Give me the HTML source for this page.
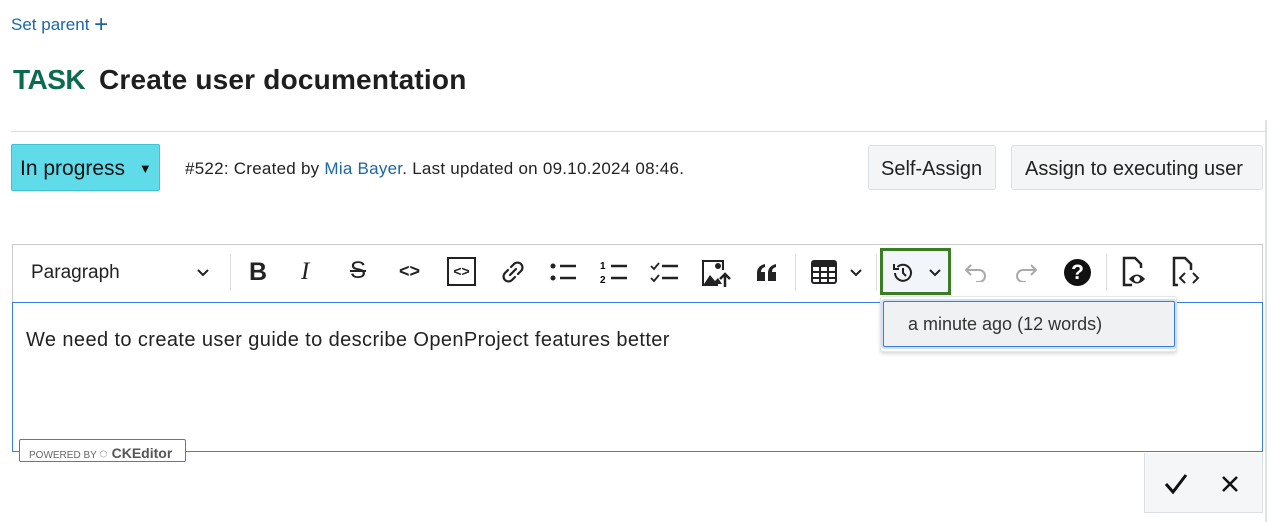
<!DOCTYPE html>
<html><head><meta charset="utf-8"><style>
*{box-sizing:border-box;margin:0;padding:0}
body{width:1272px;height:522px;background:#fff;font-family:"Liberation Sans",sans-serif;color:#222;position:relative;overflow:hidden}
.a{position:absolute}
.ic{position:absolute;top:258px}
</style></head><body>
<div class="a" style="left:11px;top:14px;font-size:17px;color:#1a67a3">Set parent <span style="font-size:24px;position:relative;top:2px;line-height:17px">+</span></div>
<div class="a" style="left:13px;top:64px;font-size:28px;font-weight:bold;color:#0b6b4f;letter-spacing:-0.5px">TASK</div>
<div class="a" style="left:99px;top:64px;font-size:28px;font-weight:bold;color:#1e1e1e;letter-spacing:0.2px">Create user documentation</div>
<div class="a" style="left:11px;top:131px;width:1254px;height:1px;background:#d9dde2"></div>
<div class="a" style="left:1265px;top:120px;width:2px;height:402px;background:#e0e3e6"></div>
<div class="a" style="left:11px;top:144px;width:149px;height:47px;background:#5fdbe9;border:1px solid #3ec3d3;border-radius:2px;font-size:21px;padding:12px 0 0 8px;color:#111">In progress <span style="font-size:13px;position:relative;left:8px;top:-2px">▼</span></div>
<div class="a" style="left:185px;top:159px;font-size:17px;color:#222;letter-spacing:0.25px">#522: Created by <span style="color:#1a67a3">Mia Bayer</span>. Last updated on 09.10.2024 08:46.</div>
<div class="a" style="left:868px;top:145px;width:128px;height:45px;background:#f4f5f6;border:1px solid #dcdfe2;border-radius:3px;font-size:20px;padding:12px 0 0 12px">Self-Assign</div>
<div class="a" style="left:1011px;top:145px;width:252px;height:45px;background:#f4f5f6;border:1px solid #dcdfe2;border-radius:3px;font-size:20px;padding:12px 0 0 13px">Assign to executing user</div>
<!-- toolbar -->
<div class="a" style="left:12px;top:244px;width:1251px;height:59px;border:1px solid #ccc;border-bottom:none;background:#fff"></div>
<div class="a" style="left:31px;top:262px;font-size:19px;color:#222">Paragraph</div>
<svg class="ic" style="left:196px;top:268px" width="14" height="10"><path d="M2 2l5 5 5-5" stroke="#222" stroke-width="2" fill="none"/></svg>
<div class="a" style="left:230px;top:254px;width:1px;height:37px;background:#ddd"></div>
<div class="a" style="left:249px;top:258px;font-size:25px;font-weight:bold">B</div>
<div class="a" style="left:301px;top:258px;font-size:25px;font-style:italic;font-family:'Liberation Serif',serif">I</div>
<div class="a" style="left:350px;top:257px;font-size:24px;text-decoration:line-through">S</div>
<div class="a" style="left:399px;top:261px;font-size:18px;font-weight:bold">&lt;&gt;</div>
<div class="a" style="left:447px;top:257px;width:29px;height:29px;border:2px solid #222;font-size:14px;font-weight:bold;text-align:center;line-height:25px">&lt;&gt;</div>
<svg class="ic" style="left:500px;top:259px" width="26" height="26"><path d="M11 8l3-3a4.5 4.5 0 0 1 7 7l-3 3M15 18l-3 3a4.5 4.5 0 0 1-7-7l3-3M10 16l6-6" stroke="#222" stroke-width="2.2" fill="none" stroke-linecap="round"/></svg>
<svg class="ic" style="left:549px" width="28" height="28"><circle cx="4" cy="8" r="2.5" fill="#222"/><circle cx="4" cy="20" r="2.5" fill="#222"/><path d="M11 8h16M11 20h16" stroke="#222" stroke-width="2.5"/></svg>
<svg class="ic" style="left:600px" width="28" height="28"><text x="0" y="11" font-size="10" font-weight="bold" font-family="Liberation Sans">1</text><text x="0" y="25" font-size="10" font-weight="bold" font-family="Liberation Sans">2</text><path d="M11 8h16M11 20h16" stroke="#222" stroke-width="2.5"/></svg>
<svg class="ic" style="left:650px" width="28" height="28"><path d="M1 8l3 3 5-6M1 20l3 3 5-6" stroke="#222" stroke-width="1.8" fill="none"/><path d="M12 8h16M12 20h16" stroke="#222" stroke-width="2.5"/></svg>
<svg class="ic" style="left:701px" width="30" height="30"><path d="M1 2h22v10h-2V4H3v22h14v2H1z" fill="#222"/><path d="M3 26l6-9 5 6 3-3 4 6z" fill="#222"/><circle cx="17" cy="8" r="3" fill="#222"/><path d="M24 29V16M19 21l5-5 5 5" stroke="#222" stroke-width="2.5" fill="none"/></svg>
<svg class="ic" style="left:755px;top:262px" width="24" height="20"><path d="M2 19v-8q0-7 8-9v3q-4 1-4 5h4v9zM13 19v-8q0-7 8-9v3q-4 1-4 5h4v9z" fill="#222"/></svg>
<div class="a" style="left:795px;top:254px;width:1px;height:37px;background:#ddd"></div>
<svg class="ic" style="left:811px;top:260px" width="26" height="24"><rect x="1" y="1" width="24" height="22" rx="2" fill="none" stroke="#222" stroke-width="2"/><rect x="1" y="1" width="24" height="6" fill="#222"/><path d="M9 7v16M17 7v16M1 12h24M1 18h24" stroke="#222" stroke-width="2"/></svg>
<svg class="ic" style="left:849px;top:268px" width="14" height="10"><path d="M2 2l5 5 5-5" stroke="#222" stroke-width="2" fill="none"/></svg>
<div class="a" style="left:876px;top:254px;width:1px;height:37px;background:#ddd"></div>
<div class="a" style="left:880px;top:248px;width:71px;height:47px;border:3px solid #3a7d22;background:#f2f6fb"></div>
<svg class="ic" style="left:891px;top:261px" width="24" height="24"><path d="M4 12a8 8 0 1 0 2.5-6" stroke="#222" stroke-width="2" fill="none"/><path d="M3 3v5h5" stroke="#222" stroke-width="2" fill="none"/><path d="M12 7v5l3 3" stroke="#222" stroke-width="2" fill="none"/></svg>
<svg class="ic" style="left:928px;top:268px" width="14" height="10"><path d="M2 2l5 5 5-5" stroke="#222" stroke-width="2" fill="none"/></svg>
<svg class="ic" style="left:963px;top:262px" width="26" height="20"><path d="M4 8h12a6 6 0 0 1 0 12h-3M8 3L3 8l5 5" stroke="#aaa" stroke-width="2" fill="none"/></svg>
<svg class="ic" style="left:1013px;top:262px" width="26" height="20"><path d="M22 8H10a6 6 0 0 0 0 12h3M18 3l5 5-5 5" stroke="#aaa" stroke-width="2" fill="none"/></svg>
<div class="a" style="left:1064px;top:259px;width:27px;height:27px;border-radius:50%;background:#111;color:#fff;font-weight:bold;font-size:21px;text-align:center;line-height:27px">?</div>
<div class="a" style="left:1106px;top:254px;width:1px;height:37px;background:#ddd"></div>
<svg class="ic" style="left:1121px;top:255px" width="32" height="34"><path d="M11 30H3V3h11l6 6v4" stroke="#222" stroke-width="2.5" fill="none"/><path d="M8 24q8-9 16 0q-8 9-16 0z" fill="#222"/><circle cx="16" cy="24" r="3" fill="#fff"/></svg>
<svg class="ic" style="left:1171px;top:255px" width="32" height="34"><path d="M7 30H3V3h11l6 6v6" stroke="#222" stroke-width="2.5" fill="none"/><path d="M14 18l-5 5 5 5M22 18l5 5-5 5" stroke="#222" stroke-width="2" fill="none"/></svg>
<!-- content -->
<div class="a" style="left:12px;top:302px;width:1251px;height:150px;border:1px solid #3b7de0;background:#fff"></div>
<div class="a" style="left:26px;top:329px;font-size:20px;color:#222;letter-spacing:0.4px">We need to create user guide to describe OpenProject features better</div>
<div class="a" style="left:19px;top:439px;width:167px;height:23px;border:1px solid #3b7de0;border-radius:2px;background:#fff;font-size:10px;color:#666;padding:5px 0 0 9px">POWERED BY <span style="font-size:14px;font-weight:bold;color:#555">◌ CKEditor</span></div>
<!-- dropdown -->
<div class="a" style="left:880px;top:296px;width:297px;height:56px;background:#fff;border:1px solid #e4e6e8;border-radius:3px;box-shadow:0 2px 3px rgba(0,0,0,.15)"></div>
<div class="a" style="left:883px;top:301px;width:292px;height:46px;background:#eff1f2;border:1px solid #3b7de0;border-radius:2px;box-shadow:0 0 0 2px #cfe1f8;font-size:18px;color:#333;padding:12px 0 0 24px">a minute ago (12 words)</div>
<!-- actions -->
<div class="a" style="left:1144px;top:453px;width:119px;height:60px;background:#f5f6f7;border:1px solid #dcdfe2;border-top:none"></div>
<svg class="a" style="left:1164px;top:473px" width="24" height="22"><path d="M2 11l7 8L22 2" stroke="#111" stroke-width="3" fill="none"/></svg>
<svg class="a" style="left:1221px;top:475px" width="18" height="18"><path d="M2 2l14 14M16 2L2 16" stroke="#111" stroke-width="2.5"/></svg>
</body></html>
